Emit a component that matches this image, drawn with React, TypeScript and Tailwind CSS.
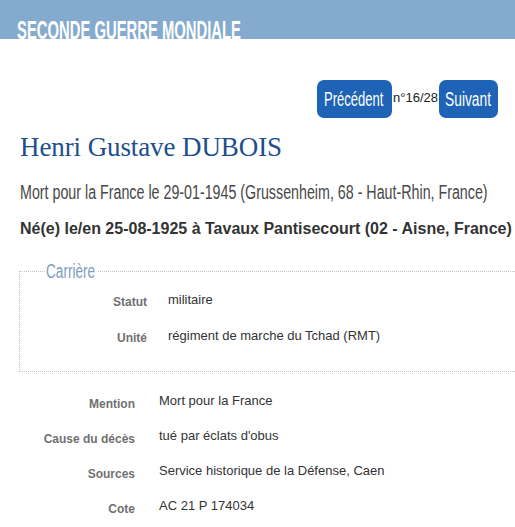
import React from 'react';

// condensed display text (Oswald-like): Arial squeezed horizontally
const Cond = ({ w, scale, className, children }: { w: string; scale: string; className: string; children: React.ReactNode }) => (
  <span className={`inline-block ${w} whitespace-nowrap`}>
    <span className={`inline-block origin-left ${scale} ${className}`}>{children}</span>
  </span>
);

const Row = ({ label, value, labelW, valuePl, labelPt }: { label: string; value: string; labelW: string; valuePl: string; labelPt: string }) => (
  <div className="flex items-start">
    <div className={`${labelW} ${labelPt} shrink-0 text-right text-[12px] leading-[20px] font-bold text-[#707070]`}>{label}</div>
    <div className={`${valuePl} text-[13px] leading-[20px] text-[#333]`}>{value}</div>
  </div>
);

export default function App() {
  return (
    <div className="w-[515px] h-[527px] overflow-hidden bg-white font-['Liberation_Sans',Arial,sans-serif]">
      {/* Header band */}
      <div className="h-[39px] bg-[#84abcd] overflow-hidden pl-[17px] pt-[17px]">
        <Cond w="w-[230px]" scale="scale-x-[0.57]" className="font-bold text-white text-[26px] leading-[26px]">
          SECONDE GUERRE MONDIALE
        </Cond>
      </div>

      {/* Navigation */}
      <div className="flex justify-end items-start pr-[17px] mt-[41px]">
        <button className="h-[38px] w-[75px] rounded-[7px] bg-[#1f63b6] text-white text-[20px] leading-[38px] text-left pl-[7px]">
          <Cond w="w-[60px]" scale="scale-x-[0.65]" className="">Précédent</Cond>
        </button>
        <span className="text-[13px] leading-[15px] text-[#222] mx-[1px] mt-[10px]">n°16/28</span>
        <button className="h-[38px] w-[59px] rounded-[7px] bg-[#1f63b6] text-white text-[20px] leading-[38px] text-left pl-[6px]">
          <Cond w="w-[47px]" scale="scale-x-[0.69]" className="">Suivant</Cond>
        </button>
      </div>

      <div className="pl-[20px]">
        <h1 className="mt-[14px] font-['Liberation_Serif',serif] text-[27px] leading-[30px] tracking-[-0.1px] text-[#1d4f8e]">
          Henri Gustave DUBOIS
        </h1>
        <p className="mt-[18px] text-[20px] leading-[24px] text-[#484848]">
          <Cond w="w-[470px]" scale="scale-x-[0.713]" className="">
            Mort pour la France le 29-01-1945 (Grussenheim, 68 - Haut-Rhin, France)
          </Cond>
        </p>
        <p className="mt-[15px] text-[16px] leading-[20px] font-bold text-[#333] whitespace-nowrap">
          Né(e) le/en 25-08-1925 à Tavaux Pantisecourt (02 - Aisne, France)
        </p>
      </div>

      {/* Carrière */}
      <fieldset className="ml-[19px] mt-[21px] w-[520px] h-[112px] border border-dotted border-[#c4c4c4] pl-[25px] pt-[8px]">
        <legend className="px-[1px] text-[20px] leading-[22px] text-[#7d9dc1]">
          <Cond w="w-[50px]" scale="scale-x-[0.68]" className="">Carrière</Cond>
        </legend>
        <div className="flex flex-col gap-[14px]">
          <Row label="Statut" value="militaire" labelW="w-[102px]" valuePl="pl-[21px]" labelPt="pt-[2px]" />
          <Row label="Unité" value="régiment de marche du Tchad (RMT)" labelW="w-[102px]" valuePl="pl-[21px]" labelPt="pt-[2px]" />
        </div>
      </fieldset>

      <div className="mt-[19px] flex flex-col gap-[12px]">
        <Row label="Mention" value="Mort pour la France" labelW="w-[135px]" valuePl="pl-[24px]" labelPt="pt-[3px]" />
        <Row label="Cause du décès" value="tué par éclats d'obus" labelW="w-[135px]" valuePl="pl-[24px]" labelPt="pt-[3px]" />
        <Row label="Sources" value="Service historique de la Défense, Caen" labelW="w-[135px]" valuePl="pl-[24px]" labelPt="pt-[3px]" />
        <Row label="Cote" value="AC 21 P 174034" labelW="w-[135px]" valuePl="pl-[24px]" labelPt="pt-[3px]" />
      </div>
    </div>
  );
}
